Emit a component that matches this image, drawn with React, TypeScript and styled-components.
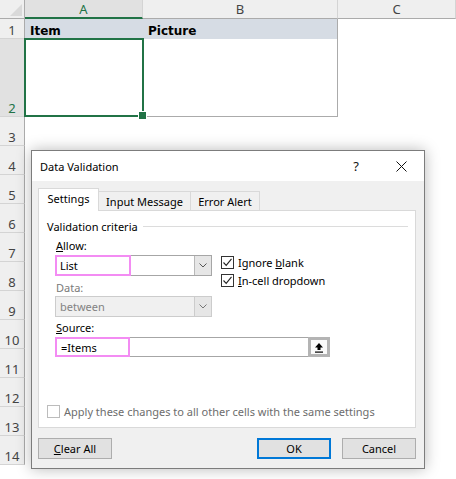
import { Fragment } from "react";
import styled, { createGlobalStyle, css } from "styled-components";

const GlobalStyle = createGlobalStyle`
  html, body {
    margin: 0;
    padding: 0;
    background: #fff;
    overflow: hidden;
  }
  body {
    font-family: "Noto Sans", "Segoe UI", sans-serif;
    color: #000;
  }
  * {
    box-sizing: border-box;
  }
`;

const green = "#217346";
const pink = "#f38cf3";

const Page = styled.div`
  position: relative;
  width: 456px;
  height: 479px;
  overflow: hidden;
`;

/* ---------- spreadsheet ---------- */

const Sheet = styled.div`
  display: grid;
  grid-template-columns: 25px 118px 195px 1fr;
  grid-template-rows: 19px 20px 78px repeat(12, 29px);
  font-family: "Noto Sans", "Segoe UI", sans-serif;
`;

const Corner = styled.div`
  background: #efefef;
  border-right: 1px solid #ababab;
  border-bottom: 1px solid #ababab;
  display: flex;
  align-items: flex-end;
  justify-content: flex-end;
  padding: 0 2px 2px 0;
`;

const ColHeader = styled.div<{ $selected?: boolean }>`
  background: ${(p) => (p.$selected ? "#e1e1e1" : "#efefef")};
  border-right: 1px solid #d4d4d4;
  border-bottom: ${(p) => (p.$selected ? `2px solid ${green}` : "1px solid #ababab")};
  color: ${(p) => (p.$selected ? green : "#444")};
  font-size: 13px;
  line-height: 18px;
  text-align: center;
`;

const RowHeader = styled.div<{ $selected?: boolean }>`
  background: ${(p) => (p.$selected ? "#e1e1e1" : "#efefef")};
  border-right: 1px solid #ababab;
  border-bottom: 1px solid #d4d4d4;
  color: ${(p) => (p.$selected ? green : "#444")};
  font-size: 13px;
  line-height: 16px;
  display: flex;
  align-items: flex-end;
  justify-content: center;
`;

const Cell = styled.div<{ $head?: boolean; $right?: boolean; $bottom?: boolean }>`
  position: relative;
  background: ${(p) => (p.$head ? "#d6dce4" : "#fff")};
  border-right: ${(p) => (p.$right ? "1px solid #ababab" : "none")};
  border-bottom: ${(p) => (p.$bottom ? "1px solid #ababab" : "none")};
  font-family: "DejaVu Sans", sans-serif;
  font-weight: bold;
  font-size: 12px;
  line-height: 16px;
  padding: 2px 4px 0 5px;
  display: flex;
  align-items: flex-end;
`;

const Selection = styled.div`
  position: absolute;
  inset: -1px;
  border: 2px solid ${green};
  pointer-events: none;
  z-index: 2;

  &::after {
    content: "";
    position: absolute;
    right: -5px;
    bottom: -5px;
    width: 7px;
    height: 7px;
    background: ${green};
    border: 1px solid #fff;
  }
`;

/* ---------- dialog ---------- */

const Dialog = styled.div`
  position: absolute;
  left: 31px;
  top: 150px;
  width: 394px;
  height: 319px;
  border: 1px solid #7c7c7c;
  background: #f0f0f0;
  box-shadow: 0 0 14px rgba(0, 0, 0, 0.28);
  display: flex;
  flex-direction: column;
  font-size: 11px;
  z-index: 5;
`;

const TitleBar = styled.div`
  height: 30px;
  background: #fff;
  display: flex;
  align-items: center;
  padding-left: 8px;
`;

const Title = styled.div`
  flex: 1;
  font-size: 11px;
  color: #000;
  padding-top: 1px;
`;

const TitleButton = styled.div<{ $w: number }>`
  width: ${(p) => p.$w}px;
  height: 30px;
  display: flex;
  align-items: center;
  justify-content: center;
  font-size: 13px;
  color: #111;
`;

const Body = styled.div`
  flex: 1;
  display: flex;
  flex-direction: column;
  padding: 7px 8px 8px 6px;
`;

const Tabs = styled.div`
  display: flex;
  align-items: flex-end;
  height: 22px;
  position: relative;
  z-index: 1;
`;

const Tab = styled.div<{ $active?: boolean; $w: number }>`
  width: ${(p) => p.$w}px;
  border: 1px solid #d9d9d9;
  border-left-width: ${(p) => (p.$active ? "1px" : "0")};
  display: flex;
  align-items: center;
  justify-content: center;
  color: #000;
  ${(p) =>
    p.$active
      ? css`
          height: 23px;
          margin-bottom: -1px;
          background: #fff;
          border-bottom: none;
          padding-bottom: 3px;
        `
      : css`
          height: 19px;
          background: #f0f0f0;
          border-bottom: none;
        `}
`;

const Pane = styled.div`
  height: 218px;
  background: #fff;
  border: 1px solid #d9d9d9;
  display: flex;
  flex-direction: column;
  padding: 8px 7px 9px 8px;
`;

const GroupTitle = styled.div`
  display: flex;
  align-items: center;
  gap: 5px;
  line-height: 15px;

  &::after {
    content: "";
    flex: 1;
    height: 1px;
    background: #dcdcdc;
  }
`;

const Fields = styled.div`
  padding-left: 8px;
  display: flex;
  flex-direction: column;
`;

const Label = styled.div<{ $disabled?: boolean; $top: number }>`
  line-height: 15px;
  margin-top: ${(p) => p.$top}px;
  padding-left: 1px;
  color: ${(p) => (p.$disabled ? "#7a7a7a" : "#000")};
`;

const Key = styled.span`
  text-decoration: underline;
  text-underline-offset: 1px;
`;

const FieldRow = styled.div`
  display: flex;
  align-items: flex-start;
  height: 21px;
  margin-top: 2px;
`;

const Combo = styled.div<{ $disabled?: boolean }>`
  position: relative;
  flex: none;
  width: 157px;
  height: 21px;
  border: 1px solid ${(p) => (p.$disabled ? "#cccccc" : "#a6a6a6")};
  background: ${(p) => (p.$disabled ? "#f0f0f0" : "#fff")};
  color: ${(p) => (p.$disabled ? "#838383" : "#000")};
  display: flex;
  align-items: center;
  padding-left: 4px;
  margin-top: ${(p) => (p.$disabled ? "1px" : "0")};
`;

const ComboValue = styled.span`
  flex: 1;
`;

const DropButton = styled.div<{ $disabled?: boolean }>`
  width: 17px;
  align-self: stretch;
  background: #e6e6e6;
  border-left: 1px solid ${(p) => (p.$disabled ? "#cccccc" : "#b8b8b8")};
  display: flex;
  align-items: center;
  justify-content: center;
`;

const Highlight = styled.div<{ $w: number }>`
  position: absolute;
  left: -1px;
  top: -1px;
  bottom: -1px;
  width: ${(p) => p.$w}px;
  border: 2px solid ${pink};
  pointer-events: none;
`;

const Checks = styled.div`
  display: flex;
  flex-direction: column;
  gap: 5px;
  margin: 1px 0 0 9px;
`;

const CheckRow = styled.div<{ $disabled?: boolean }>`
  display: flex;
  align-items: center;
  gap: 4px;
  line-height: 13px;
  color: ${(p) => (p.$disabled ? "#6d6d6d" : "#000")};
`;

const Box = styled.div<{ $disabled?: boolean }>`
  width: 13px;
  height: 13px;
  border: 1px solid ${(p) => (p.$disabled ? "#bcbcbc" : "#333")};
  background: #fff;
  display: flex;
  align-items: center;
  justify-content: center;
`;

const SourceInput = styled.div`
  position: relative;
  width: 275px;
  height: 20px;
  margin-top: 2px;
  border: 1px solid #a6a6a6;
  background: #fff;
  display: flex;
  align-items: center;
  padding-left: 5px;
`;

const RefButton = styled.div`
  position: absolute;
  right: -1px;
  top: -1px;
  bottom: -1px;
  width: 22px;
  border: 3px solid #b4b4b4;
  background: #fafafa;
  display: flex;
  align-items: center;
  justify-content: center;
`;

const ApplyRow = styled(CheckRow)`
  margin-top: auto;
`;

const Footer = styled.div`
  display: flex;
  margin-top: 10px;
  gap: 11px;
`;

const Button = styled.div<{ $default?: boolean }>`
  width: 74px;
  height: 21px;
  background: #e1e1e1;
  border: ${(p) => (p.$default ? "2px solid #0078d7" : "1px solid #adadad")};
  display: flex;
  align-items: center;
  justify-content: center;
  color: #000;
  font-size: 11px;
`;

const FooterSpace = styled.div`
  flex: 1;
`;

function Chevron({ color }: { color: string }) {
  return (
    <svg width="8" height="5" viewBox="0 0 8 5">
      <path d="M0.5 0.5 L4 4 L7.5 0.5" fill="none" stroke={color} strokeWidth="1" />
    </svg>
  );
}

function Check() {
  return (
    <svg width="11" height="11" viewBox="0 0 11 11">
      <path d="M1.5 5.5 L4.2 8.3 L9.5 1.8" fill="none" stroke="#222" strokeWidth="1.1" />
    </svg>
  );
}

function CheckBox({ checked, disabled }: { checked?: boolean; disabled?: boolean }) {
  return <Box $disabled={disabled}>{checked ? <Check /> : null}</Box>;
}

function CloseIcon() {
  return (
    <svg width="11" height="11" viewBox="0 0 11 11">
      <path d="M0.5 0.5 L10.5 10.5 M10.5 0.5 L0.5 10.5" stroke="#111" strokeWidth="1" />
    </svg>
  );
}

function UploadIcon() {
  return (
    <svg width="10" height="11" viewBox="0 0 10 11">
      <path d="M5 1 L9 5.5 L6.5 5.5 L6.5 8 L3.5 8 L3.5 5.5 L1 5.5 Z" fill="#000" />
      <rect x="1" y="9.5" width="8" height="1.2" fill="#000" />
    </svg>
  );
}

function CornerMark() {
  return (
    <svg width="12" height="12" viewBox="0 0 12 12">
      <path d="M12 0 L12 12 L0 12 Z" fill="#d9d9d9" />
    </svg>
  );
}

const rows = [3, 4, 5, 6, 7, 8, 9, 10, 11, 12, 13, 14];

export default function App() {
  return (
    <Page>
      <GlobalStyle />
      <Sheet>
        <Corner>
          <CornerMark />
        </Corner>
        <ColHeader $selected>A</ColHeader>
        <ColHeader>B</ColHeader>
        <ColHeader>C</ColHeader>

        <RowHeader>1</RowHeader>
        <Cell $head>Item</Cell>
        <Cell $head $right>
          Picture
        </Cell>
        <Cell />

        <RowHeader $selected>2</RowHeader>
        <Cell $bottom>
          <Selection />
        </Cell>
        <Cell $right $bottom />
        <Cell />

        {rows.map((r) => (
          <Fragment key={r}>
            <RowHeader>{r}</RowHeader>
            <Cell />
            <Cell />
            <Cell />
          </Fragment>
        ))}
      </Sheet>

      <Dialog>
        <TitleBar>
          <Title>Data Validation</Title>
          <TitleButton $w={44}>?</TitleButton>
          <TitleButton $w={46}>
            <CloseIcon />
          </TitleButton>
        </TitleBar>
        <Body>
          <Tabs>
            <Tab $active $w={61}>
              Settings
            </Tab>
            <Tab $w={92}>Input Message</Tab>
            <Tab $w={69}>Error Alert</Tab>
          </Tabs>
          <Pane>
            <GroupTitle>Validation criteria</GroupTitle>
            <Fields>
              <Label $top={4}>
                <Key>A</Key>llow:
              </Label>
              <FieldRow>
                <Combo>
                  <ComboValue>List</ComboValue>
                  <DropButton>
                    <Chevron color="#555" />
                  </DropButton>
                  <Highlight $w={76} />
                </Combo>
                <Checks>
                  <CheckRow>
                    <CheckBox checked />
                    <span>
                      Ignore <Key>b</Key>lank
                    </span>
                  </CheckRow>
                  <CheckRow>
                    <CheckBox checked />
                    <span>
                      <Key>I</Key>n-cell dropdown
                    </span>
                  </CheckRow>
                </Checks>
              </FieldRow>
              <Label $top={4} $disabled>
                Data:
              </Label>
              <Combo $disabled>
                <ComboValue>between</ComboValue>
                <DropButton $disabled>
                  <Chevron color="#777" />
                </DropButton>
              </Combo>
              <Label $top={3}>
                <Key>S</Key>ource:
              </Label>
              <SourceInput>
                =Items
                <Highlight $w={75} />
                <RefButton>
                  <UploadIcon />
                </RefButton>
              </SourceInput>
            </Fields>
            <ApplyRow $disabled>
              <CheckBox disabled />
              <span>Apply these changes to all other cells with the same settings</span>
            </ApplyRow>
          </Pane>
          <Footer>
            <Button>
              <span>
                <Key>C</Key>lear All
              </span>
            </Button>
            <FooterSpace />
            <Button $default>OK</Button>
            <Button>Cancel</Button>
          </Footer>
        </Body>
      </Dialog>
    </Page>
  );
}
